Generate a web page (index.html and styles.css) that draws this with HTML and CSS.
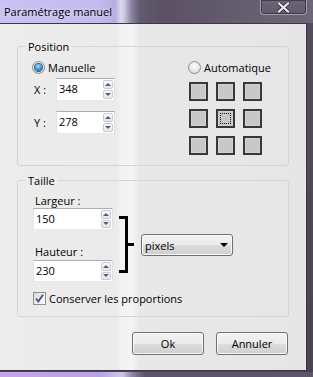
FILE: index.html
```html
<!DOCTYPE html>
<html lang="fr">
<head>
<meta charset="utf-8">
<title>Paramétrage manuel</title>
<link rel="stylesheet" href="styles.css">
</head>
<body>
<div class="window">
  <div class="titlebar">
    <span class="title">Paramétrage manuel</span>
    <div class="close">
      <svg width="13" height="11" viewBox="0 0 13 11"><path d="M2 1.5 L11 9.5 M11 1.5 L2 9.5" stroke="#3d3644" stroke-width="4" stroke-linecap="square"/><path d="M2 1.5 L11 9.5 M11 1.5 L2 9.5" stroke="#e9e6ee" stroke-width="2.2" stroke-linecap="square"/></svg>
    </div>
  </div>
  <div class="middle">
    <div class="client">
      <fieldset class="group group-position">
        <legend>Position</legend>
        <div class="pos-body">
          <div class="pos-left">
            <div class="radio-row"><span class="radio checked"></span><span>Manuelle</span></div>
            <div class="coord-row coord-x">
              <span class="coord-label">X :</span>
              <div class="spin spin-small">
                <span class="spin-value">348</span>
                <div class="spin-btns"><span class="spin-btn up"></span><span class="spin-btn down"></span></div>
              </div>
            </div>
            <div class="coord-row coord-y">
              <span class="coord-label">Y :</span>
              <div class="spin spin-small">
                <span class="spin-value">278</span>
                <div class="spin-btns"><span class="spin-btn up"></span><span class="spin-btn down"></span></div>
              </div>
            </div>
          </div>
          <div class="pos-right">
            <div class="radio-row"><span class="radio"></span><span>Automatique</span></div>
            <div class="grid9">
              <span class="cell"></span><span class="cell"></span><span class="cell"></span>
              <span class="cell"></span><span class="cell focused"><span class="focus"></span></span><span class="cell"></span>
              <span class="cell"></span><span class="cell"></span><span class="cell"></span>
            </div>
          </div>
        </div>
      </fieldset>

      <fieldset class="group group-size">
        <legend>Taille</legend>
        <div class="size-body">
          <div class="size-row">
            <div class="size-left">
              <div class="field-label label-w">Largeur :</div>
              <div class="spin spin-wide">
                <span class="spin-value">150</span>
                <div class="spin-btns"><span class="spin-btn up"></span><span class="spin-btn down"></span></div>
              </div>
              <div class="field-label label-h">Hauteur :</div>
              <div class="spin spin-wide">
                <span class="spin-value">230</span>
                <div class="spin-btns"><span class="spin-btn up"></span><span class="spin-btn down"></span></div>
              </div>
            </div>
            <svg class="bracket" width="15" height="57" viewBox="0 0 15 57"><path d="M0 1.5 H9 M7.5 0 V57 M0 55.5 H9 M9 28.5 H15" stroke="#000" stroke-width="3" fill="none"/></svg>
            <div class="combo"><span>pixels</span><span class="combo-arrow"></span></div>
          </div>
          <div class="check-row"><span class="checkbox"><svg width="11" height="11" viewBox="0 0 11 11"><path d="M2 5.5 L4.3 8.5 L9 1.8" stroke="#3b4f8a" stroke-width="1.8" fill="none"/></svg></span><span>Conserver les proportions</span></div>
        </div>
      </fieldset>

      <div class="buttons">
        <button class="btn">Ok</button>
        <button class="btn">Annuler</button>
      </div>
    </div>
    <div class="rframe"></div>
  </div>
  <div class="bframe"></div>
</div>
</body>
</html>
```

FILE: styles.css
```css
* { box-sizing: border-box; }
html, body { margin: 0; padding: 0; }
body {
  width: 313px;
  height: 377px;
  overflow: hidden;
  font-family: "Open Sans", "Noto Sans", sans-serif;
  font-size: 11px;
  line-height: 15px;
  color: #000;
  background: #5e5568;
}
.window {
  width: 313px;
  height: 377px;
  display: flex;
  flex-direction: column;
  background: #5e5568;
}
.titlebar {
  height: 23px;
  flex: none;
  display: flex;
  justify-content: space-between;
  align-items: flex-start;
  background: linear-gradient(to right, #cac2f3 0, #c3baee 100px, #b7addf 115px, #dcd7f0 121px, #cfc8e6 124px, #8f86a6 131px, #625a6e 140px, #5a5164 160px, #635c6d 230px, #6c6677 100%);
}
.title {
  padding: 4px 0 0 4px;
  font-size: 11px;
  line-height: 15px;
  text-shadow: 0 0 5px rgba(255,255,255,0.7);
}
.close {
  width: 47px;
  height: 15px;
  margin-right: 6px;
  border: 1px solid #a49cae;
  border-top: none;
  border-radius: 0 0 4px 4px;
  box-shadow: inset 0 0 0 1px rgba(40,34,48,0.6);
  background: linear-gradient(#6d6577, #625a6c);
  display: flex;
  justify-content: center;
  align-items: center;
}
.middle {
  flex: 1;
  display: flex;
}
.client {
  width: 307px;
  border-top: 1px solid #3d3646;
  border-right: 1px solid #3d3646;
  border-bottom: 1px solid #3d3646;
  background: linear-gradient(to right, #ececec 0, #ebebeb 116px, #f3f3f3 122px, #f4f4f4 132px, #e8e8e8 140px, #e6e6e6 100%);
  padding: 15px 17px 0 17px;
}
.rframe { flex: 1; background: linear-gradient(#544b5e, #4b4354); }
.bframe {
  height: 6px;
  flex: none;
  border-top: 1px solid #4a4358;
  background: linear-gradient(to right, #c4a6e6 0, #b9a2de 100px, #cfc6ec 122px, #8e86a4 132px, #5c5468 145px, #5d566a 100%);
}

/* group boxes */
.group {
  margin: 0;
  padding: 0;
  border: 1px solid #ced6db;
  border-radius: 3px;
  min-width: 0;
}
.group legend {
  margin-left: 7px;
  padding: 0 3px;
  line-height: 15px;
}
.group-size { margin-top: 7px; }

/* position */
.pos-body {
  display: flex;
  justify-content: space-between;
  padding: 6px 17px 10px 14px;
}
.radio-row {
  display: flex;
  align-items: center;
  height: 15px;
}
.radio {
  width: 13px;
  height: 13px;
  border-radius: 50%;
  border: 1px solid #8a8c8f;
  background: radial-gradient(circle at 50% 40%, #fbfbfb 0, #e9e9e9 50%, #cfcfcf 100%);
  margin-right: 3px;
  display: flex;
  align-items: center;
  justify-content: center;
}
.radio.checked::after {
  content: "";
  width: 7px;
  height: 7px;
  border-radius: 50%;
  background: radial-gradient(circle at 45% 35%, #a6e2fb 0, #3c95d4 50%, #14417d 100%);
  box-shadow: 0 0 0 1px #2b5e92;
}
.coord-row {
  display: flex;
  align-items: center;
}
.coord-x { margin-top: 3px; }
.coord-y { margin-top: 10px; }
.coord-label {
  width: 24px;
  padding-left: 2px;
}
.spin {
  display: flex;
  height: 23px;
  background: #fff;
  border: 1px solid;
  border-color: #abadb3 #dbdfe6 #e3e9ef #e2e3ea;
}
.spin-small { width: 59px; }
.spin-wide { width: 80px; height: 22px; }
.spin-value {
  flex: 1;
  padding-left: 2px;
  line-height: 20px;
}
.spin-btns {
  display: flex;
  flex-direction: column;
  gap: 1px;
  padding: 1px 1px 1px 0;
  width: 11px;
}
.spin-btn {
  flex: 1;
  border: 1px solid #c6cad2;
  border-radius: 2px;
  background: linear-gradient(#fafafa, #e6e6e6);
  display: flex;
  align-items: center;
  justify-content: center;
}
.spin-btn::after {
  content: "";
  width: 0;
  height: 0;
  border-left: 3px solid transparent;
  border-right: 3px solid transparent;
}
.spin-btn.up::after { border-bottom: 3px solid #4c5c80; }
.spin-btn.down::after { border-top: 3px solid #4c5c80; }

.pos-right { display: flex; flex-direction: column; }
.grid9 {
  margin: 7px 0 0 1px;
  display: grid;
  grid-template-columns: repeat(3, 19px);
  grid-auto-rows: 19px;
  gap: 8px;
}
.cell {
  border: 2px solid #383838;
  background: #c7c7c7;
  box-shadow: inset 0 0 0 1px #d2d2d2;
  display: flex;
  align-items: center;
  justify-content: center;
}
.focus {
  width: 11px;
  height: 11px;
  border: 1px dotted #1e1e1e;
}

/* taille */
.size-body { padding: 5px 0 10px 15px; }
.size-row {
  display: flex;
  align-items: flex-start;
}
.size-left { display: flex; flex-direction: column; }
.field-label { padding-left: 2px; line-height: 15px; }
.label-h { margin-top: 14px; margin-bottom: 1px; }
.bracket { margin: 23px 0 0 6px; flex: none; }
.combo {
  margin: 41px 0 0 7px;
  width: 92px;
  height: 22px;
  border: 1px solid #707070;
  border-radius: 3px;
  background: linear-gradient(#f2f2f2 0, #ebebeb 50%, #dddddd 50%, #cfcfcf 100%);
  box-shadow: inset 0 0 0 1px rgba(255,255,255,0.8);
  display: flex;
  align-items: center;
  justify-content: space-between;
  padding: 0 4px 0 3px;
}
.combo-arrow {
  width: 0;
  height: 0;
  border-left: 4px solid transparent;
  border-right: 4px solid transparent;
  border-top: 4px solid #000;
}
.check-row {
  margin-top: 9px;
  display: flex;
  align-items: center;
  height: 15px;
}
.checkbox {
  width: 13px;
  height: 13px;
  border: 1px solid #8e8f8f;
  background: linear-gradient(135deg, #dcdcdc, #fbfbfb);
  margin-right: 3px;
  display: flex;
  align-items: center;
  justify-content: center;
}

/* buttons */
.buttons {
  display: flex;
  justify-content: flex-end;
  gap: 12px;
  margin-top: 15px;
  padding-right: 1px;
}
.btn {
  width: 72px;
  height: 23px;
  padding: 0;
  font-family: inherit;
  font-size: 11px;
  color: #000;
  border: 1px solid #707070;
  border-radius: 3px;
  background: linear-gradient(#f2f2f2 0, #ebebeb 50%, #dddddd 50%, #cfcfcf 100%);
  box-shadow: inset 0 0 0 1px rgba(255,255,255,0.8);
}
```
